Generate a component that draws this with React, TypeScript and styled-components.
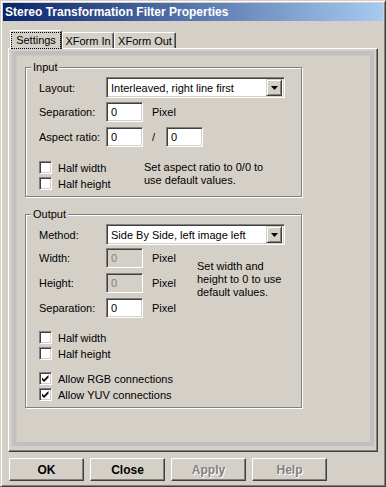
import React from "react";
import styled, { createGlobalStyle } from "styled-components";

const GlobalStyle = createGlobalStyle`
  html, body {
    margin: 0;
    padding: 0;
    background: #d4d0c8;
  }
  body {
    font-family: "Liberation Sans", Arial, sans-serif;
    font-size: 11px;
    color: #000;
  }
`;

const Window = styled.div`
  box-sizing: border-box;
  width: 386px;
  height: 487px;
  background: #d4d0c8;
  border: 1px solid;
  border-color: #d4d0c8 #404040 #404040 #d4d0c8;
  box-shadow: inset 1px 1px #fff, inset -1px -1px #808080;
  padding: 2px;
  display: flex;
  flex-direction: column;
`;

const TitleBar = styled.div`
  height: 18px;
  flex-shrink: 0;
  display: flex;
  align-items: center;
  padding-left: 2px;
  background: linear-gradient(to right, #0a246a, #a6caf0);
  color: #fff;
  font-weight: bold;
  font-size: 12px;
  white-space: nowrap;
`;

const Body = styled.div`
  padding: 9px 0 0 5px;
  display: flex;
  flex-direction: column;
`;

const TabStrip = styled.div`
  display: flex;
  align-items: flex-end;
  height: 18px;
  margin-left: 2px;
  position: relative;
  z-index: 1;
`;

const Tab = styled.div<{ $active?: boolean; $width: number }>`
  box-sizing: border-box;
  width: ${({ $width }) => $width}px;
  height: ${({ $active }) => ($active ? 19 : 16)}px;
  margin-bottom: ${({ $active }) => ($active ? -1 : 0)}px;
  background: #d4d0c8;
  border-top: 1px solid #fff;
  border-left: 1px solid #fff;
  border-right: 1px solid #404040;
  box-shadow: inset -1px 0 #808080;
  border-radius: 2px 2px 0 0;
  display: flex;
  align-items: center;
  justify-content: center;
  white-space: nowrap;
`;

const FocusRing = styled.span`
  box-sizing: border-box;
  display: flex;
  align-items: center;
  justify-content: center;
  width: 48px;
  height: 15px;
  outline: 1px dotted #000;
`;

const Panel = styled.div`
  box-sizing: border-box;
  width: 370px;
  height: 404px;
  border: 1px solid;
  border-color: #fff #404040 #404040 #fff;
  box-shadow: inset -1px -1px #808080;
  padding: 2px 3px 5px 3px;
  display: flex;
`;

const Page = styled.div`
  flex: 1;
  border: 4px solid #c0c0c0;
  box-shadow: inset 1px 1px #c8c6c2;
  padding: 12px 0 0 9px;
`;

const GroupBox = styled.div<{ $height: number; $gap?: number }>`
  box-sizing: border-box;
  position: relative;
  width: 277px;
  height: ${({ $height }) => $height}px;
  margin-top: ${({ $gap }) => $gap ?? 0}px;
  border: 1px solid #808080;
  box-shadow: inset 1px 1px #fff, 1px 1px #fff;
  padding: 9px 0 0 13px;
`;

const Legend = styled.span`
  position: absolute;
  top: -7px;
  left: 5px;
  padding: 0 2px;
  line-height: 13px;
  background: #d4d0c8;
`;

const Row = styled.div<{ $top?: number }>`
  display: flex;
  align-items: center;
  margin-top: ${({ $top }) => $top ?? 0}px;
`;

const FieldLabel = styled.span`
  width: 67px;
  flex-shrink: 0;
`;

const Sunken = styled.div`
  box-sizing: border-box;
  border: 1px solid;
  border-color: #808080 #fff #fff #808080;
  box-shadow: inset 1px 1px #404040, inset -1px -1px #d4d0c8;
`;

const Combo = styled(Sunken)`
  width: 179px;
  height: 21px;
  background: #fff;
  display: flex;
  align-items: center;
  padding: 0 2px 0 4px;
  white-space: nowrap;
`;

const DropButton = styled.div`
  box-sizing: border-box;
  margin-left: auto;
  width: 16px;
  height: 17px;
  background: #d4d0c8;
  border: 1px solid;
  border-color: #d4d0c8 #404040 #404040 #d4d0c8;
  box-shadow: inset 1px 1px #fff, inset -1px -1px #808080;
  display: flex;
  align-items: center;
  justify-content: center;
`;

const Edit = styled(Sunken)<{ $disabled?: boolean }>`
  width: 37px;
  height: 20px;
  background: ${({ $disabled }) => ($disabled ? "#d4d0c8" : "#fff")};
  color: ${({ $disabled }) => ($disabled ? "#808080" : "#000")};
  display: flex;
  align-items: center;
  padding-left: 4px;
`;

const Unit = styled.span`
  margin-left: 9px;
`;

const Slash = styled.span`
  margin: 0 11px 0 9px;
`;

const Split = styled.div<{ $top: number }>`
  display: flex;
  margin-top: ${({ $top }) => $top}px;
`;

const Column = styled.div<{ $width?: number; $gap?: number }>`
  display: flex;
  flex-direction: column;
  gap: ${({ $gap }) => $gap ?? 0}px;
  width: ${({ $width }) => ($width ? `${$width}px` : "auto")};
  flex-shrink: 0;
`;

const Note = styled.div<{ $top?: number }>`
  line-height: 13px;
  margin-top: ${({ $top }) => $top ?? 0}px;
`;

const CheckRow = styled.label`
  display: flex;
  align-items: center;
  height: 13px;
  gap: 6px;
  white-space: nowrap;
`;

const CheckBox = styled(Sunken)`
  width: 13px;
  height: 13px;
  background: #fff;
  flex-shrink: 0;
  position: relative;
`;

const ButtonRow = styled.div`
  display: flex;
  gap: 6px;
  margin: 6px 0 0 1px;
`;

const Button = styled.div<{ $disabled?: boolean }>`
  box-sizing: border-box;
  width: 75px;
  height: 23px;
  border: 1px solid;
  border-color: #fff #404040 #404040 #fff;
  box-shadow: inset -1px -1px #808080;
  display: flex;
  align-items: center;
  justify-content: center;
  font-weight: bold;
  font-size: 12px;
  color: ${({ $disabled }) => ($disabled ? "#808080" : "#000")};
  text-shadow: ${({ $disabled }) => ($disabled ? "1px 1px #fff" : "none")};
`;

const Arrow = () => (
  <svg width="7" height="4" viewBox="0 0 7 4">
    <polygon points="0,0 7,0 3.5,4" fill="#000" />
  </svg>
);

const Tick = () => (
  <svg width="11" height="11" viewBox="0 0 11 11" style={{ position: "absolute", left: 0, top: 0 }}>
    <path d="M2 4.5 L4 6.5 L8.5 2 L8.5 4.5 L4 9 L2 7 Z" fill="#000" />
  </svg>
);

const Check = ({ label, checked }: { label: string; checked?: boolean }) => (
  <CheckRow>
    <CheckBox>{checked && <Tick />}</CheckBox>
    <span>{label}</span>
  </CheckRow>
);

const tabs = [
  { name: "Settings", width: 52 },
  { name: "XForm In", width: 52 },
  { name: "XForm Out", width: 62 }
];

export default function App() {
  return (
    <>
      <GlobalStyle />
      <Window>
        <TitleBar>Stereo Transformation Filter Properties</TitleBar>
        <Body>
          <TabStrip>
            {tabs.map((tab, i) => (
              <Tab key={tab.name} $active={i === 0} $width={tab.width}>
                {i === 0 ? <FocusRing>{tab.name}</FocusRing> : tab.name}
              </Tab>
            ))}
          </TabStrip>
          <Panel>
            <Page>
              <GroupBox $height={130}>
                <Legend>Input</Legend>
                <Row>
                  <FieldLabel>Layout:</FieldLabel>
                  <Combo>
                    Interleaved, right line first
                    <DropButton>
                      <Arrow />
                    </DropButton>
                  </Combo>
                </Row>
                <Row $top={4}>
                  <FieldLabel>Separation:</FieldLabel>
                  <Edit>0</Edit>
                  <Unit>Pixel</Unit>
                </Row>
                <Row $top={5}>
                  <FieldLabel>Aspect ratio:</FieldLabel>
                  <Edit>0</Edit>
                  <Slash>/</Slash>
                  <Edit>0</Edit>
                </Row>
                <Split $top={14}>
                  <Column $width={105} $gap={3}>
                    <Check label="Half width" />
                    <Check label="Half height" />
                  </Column>
                  <Note>
                    Set aspect ratio to 0/0 to
                    <br />
                    use default values.
                  </Note>
                </Split>
              </GroupBox>

              <GroupBox $height={194} $gap={17}>
                <Legend>Output</Legend>
                <Row>
                  <FieldLabel>Method:</FieldLabel>
                  <Combo>
                    Side By Side, left image left
                    <DropButton>
                      <Arrow />
                    </DropButton>
                  </Combo>
                </Row>
                <Split $top={3}>
                  <Column $width={158}>
                    <Row>
                      <FieldLabel>Width:</FieldLabel>
                      <Edit $disabled>0</Edit>
                      <Unit>Pixel</Unit>
                    </Row>
                    <Row $top={5}>
                      <FieldLabel>Height:</FieldLabel>
                      <Edit $disabled>0</Edit>
                      <Unit>Pixel</Unit>
                    </Row>
                    <Row $top={5}>
                      <FieldLabel>Separation:</FieldLabel>
                      <Edit>0</Edit>
                      <Unit>Pixel</Unit>
                    </Row>
                  </Column>
                  <Note $top={12}>
                    Set width and
                    <br />
                    height to 0 to use
                    <br />
                    default values.
                  </Note>
                </Split>
                <Column $gap={3} style={{ marginTop: 13 }}>
                  <Check label="Half width" />
                  <Check label="Half height" />
                </Column>
                <Column $gap={3} style={{ marginTop: 12 }}>
                  <Check label="Allow RGB connections" checked />
                  <Check label="Allow YUV connections" checked />
                </Column>
              </GroupBox>
            </Page>
          </Panel>
          <ButtonRow>
            <Button>OK</Button>
            <Button>Close</Button>
            <Button $disabled>Apply</Button>
            <Button $disabled>Help</Button>
          </ButtonRow>
        </Body>
      </Window>
    </>
  );
}
